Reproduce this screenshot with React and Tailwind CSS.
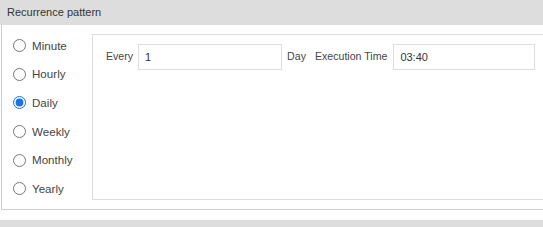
import React, { useState } from 'react';

const OPTIONS = ['Minute', 'Hourly', 'Daily', 'Weekly', 'Monthly', 'Yearly'];

const App = () => {
  const [pattern, setPattern] = useState('Daily');
  const [every, setEvery] = useState('1');
  const [time, setTime] = useState('03:40');

  return (
    <div className="w-full h-[227px] overflow-hidden bg-white" style={{ fontFamily: '"Liberation Sans", Arial, sans-serif' }}>
      <div className="w-[570px]">
        {/* Header */}
        <div className="h-[25px] bg-[#dddddd] flex items-center px-[7px] text-[11px] text-[#333]">
          Recurrence pattern
        </div>

        {/* Panel */}
        <div className="flex border border-t-0 border-[#cccccc] ml-px pt-[9px] pb-[9px]">
          <div className="w-[90px] h-[166px] shrink-0">
            <div className="-mt-[3px]">
              {OPTIONS.map((opt) => (
                <label key={opt} className="h-[28.7px] flex items-center gap-[6px] pl-[11px] text-[11.6px] text-[#444] cursor-pointer">
                  <input
                    type="radio"
                    name="pattern"
                    checked={pattern === opt}
                    onChange={() => setPattern(opt)}
                    className="w-[13px] h-[13px] m-0 accent-[#1a73e8]"
                  />
                  {opt}
                </label>
              ))}
            </div>
          </div>

          <div className="flex-1 h-[166px] border border-[#dddddd] pt-[9px] pl-[13px]">
            <div className="flex items-center text-[10.6px] text-[#444]">
              <span>Every</span>
              <input
                value={every}
                onChange={(e) => setEvery(e.target.value)}
                className="ml-[5px] w-[144px] h-[26px] border border-[#dddddd] px-[6px] text-[11px] text-[#333] outline-none"
              />
              <span className="ml-[5px]">Day</span>
              <span className="ml-[9px]">Execution Time</span>
              <input
                value={time}
                onChange={(e) => setTime(e.target.value)}
                className="ml-[6px] w-[142px] h-[26px] border border-[#dddddd] px-[6px] text-[11px] text-[#333] outline-none"
              />
            </div>
          </div>
        </div>

        {/* Next section header */}
        <div className="mt-[10px] h-[25px] bg-[#dddddd]" />
      </div>
    </div>
  );
};

export default App;
